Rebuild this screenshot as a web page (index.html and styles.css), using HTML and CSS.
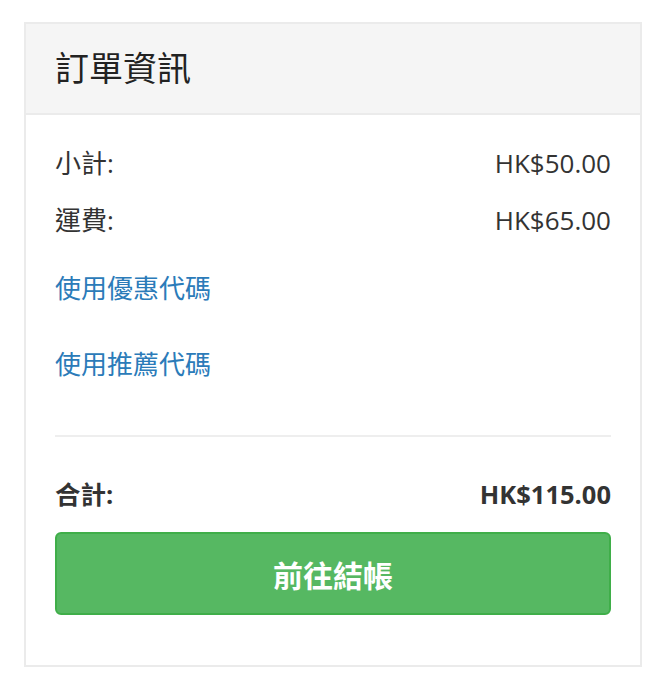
FILE: index.html
```html
<!DOCTYPE html>
<html lang="zh-Hant">
<head>
<meta charset="utf-8">
<title>訂單資訊</title>
<link rel="stylesheet" href="styles.css">
</head>
<body>
<div class="page">
  <section class="card">
    <header class="card-header">
      <h2 class="card-title">訂單資訊</h2>
    </header>
    <div class="card-body">
      <div class="row row-subtotal">
        <span class="label">小計:</span>
        <span class="value">HK$50.00</span>
      </div>
      <div class="row row-shipping">
        <span class="label">運費:</span>
        <span class="value">HK$65.00</span>
      </div>
      <a class="link link-coupon" href="#">使用優惠代碼</a>
      <a class="link link-referral" href="#">使用推薦代碼</a>
      <hr class="divider">
      <div class="row row-total">
        <span class="label">合計:</span>
        <span class="value">HK$115.00</span>
      </div>
      <button class="btn-checkout" type="button">前往結帳</button>
    </div>
  </section>
</div>
</body>
</html>
```
FILE: styles.css
```css
* { box-sizing: border-box; }
html, body { margin: 0; padding: 0; background: #fff; }
body {
  font-family: "Open Sans", "Noto Sans CJK TC", sans-serif;
  color: #333;
}
.page {
  padding: 22px 24px 30px 24px;
}
.card {
  width: 618px;
  border: 2px solid #ebebeb;
  background: #fff;
}
.card-header {
  background: #f5f5f5;
  border-bottom: 2px solid #ebebeb;
  height: 91px;
  display: flex;
  align-items: center;
  padding: 0 29px 2px 29px;
}
.card-title {
  margin: 0;
  font-size: 34px;
  font-weight: 400;
  line-height: 40px;
  color: #222;
}
.card-body {
  padding: 30px 29px 50px 29px;
  display: flex;
  flex-direction: column;
}
.row {
  display: flex;
  justify-content: space-between;
  align-items: center;
  height: 36px;
  font-size: 26px;
  line-height: 36px;
}
.row-shipping { margin-top: 21px; }
.link {
  display: block;
  font-size: 26px;
  line-height: 36px;
  color: #2b7bb9;
  text-decoration: none;
}
.link-coupon { margin-top: 32px; }
.link-referral { margin-top: 40px; }
.divider {
  border: 0;
  height: 2px;
  background: #eeeeee;
  margin: 53px 0 0 0;
}
.row-total {
  margin-top: 39px;
  font-size: 25.5px;
  font-weight: 700;
}
.btn-checkout {
  margin-top: 20px;
  height: 83px;
  width: 100%;
  background: #56b862;
  border: 2px solid #3fae49;
  border-radius: 6px;
  color: #fff;
  font-family: "Open Sans", "Noto Sans CJK TC", sans-serif;
  font-size: 30px;
  font-weight: 700;
  cursor: pointer;
}
```
